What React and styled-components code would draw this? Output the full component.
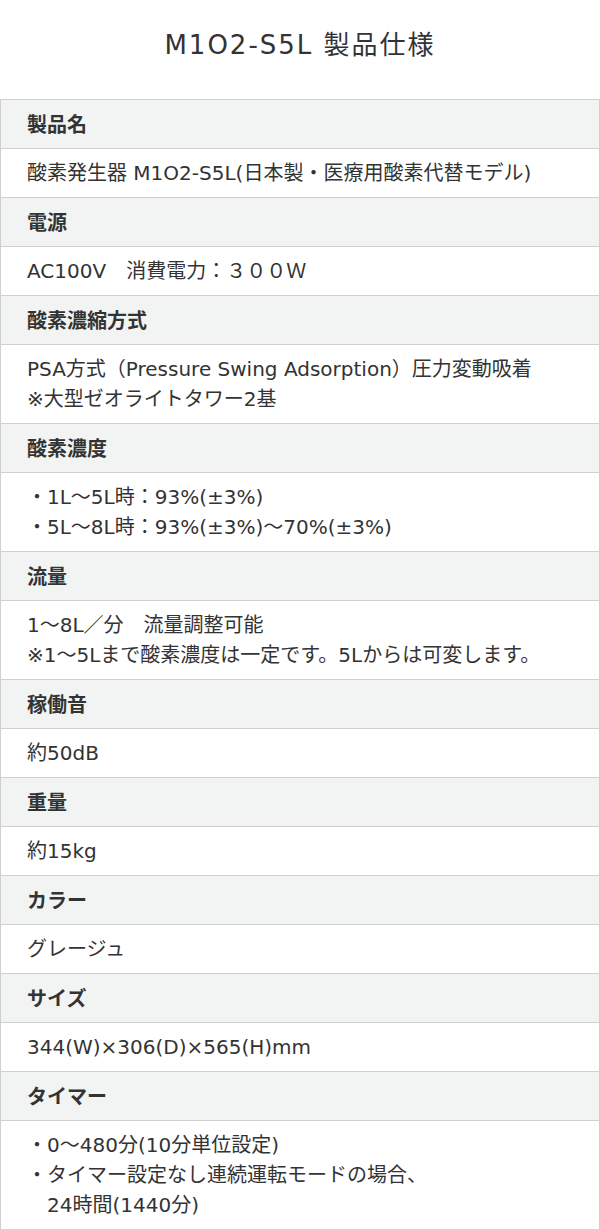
import styled, { createGlobalStyle } from 'styled-components';

const GlobalStyle = createGlobalStyle`
  body {
    margin: 0;
    background: #fff;
    font-family: "DejaVu Sans", "Noto Sans CJK JP", sans-serif;
    color: #333;
  }
`;

// spec rows, each item is one line (or a bullet item)
const specs = [
  { label: '製品名', lines: ['酸素発生器 M1O2-S5L(日本製・医療用酸素代替モデル)'] },
  { label: '電源', lines: ['AC100V　消費電力：３００Ｗ'] },
  {
    label: '酸素濃縮方式',
    lines: ['PSA方式（Pressure Swing Adsorption）圧力変動吸着', '※大型ゼオライトタワー2基'],
  },
  {
    label: '酸素濃度',
    bullets: ['1L～5L時：93%(±3%)', '5L～8L時：93%(±3%)～70%(±3%)'],
  },
  {
    label: '流量',
    lines: ['1～8L／分　流量調整可能', '※1～5Lまで酸素濃度は一定です。5Lからは可変します。'],
  },
  { label: '稼働音', lines: ['約50dB'] },
  { label: '重量', lines: ['約15kg'] },
  { label: 'カラー', lines: ['グレージュ'] },
  { label: 'サイズ', lines: ['344(W)×306(D)×565(H)mm'] },
  {
    label: 'タイマー',
    bullets: ['0～480分(10分単位設定)', ['タイマー設定なし連続運転モードの場合、', '24時間(1440分)']],
  },
];

const App = () => {
  return (
    <>
      <GlobalStyle />
      <Page>
        <Title>M1O2-S5L 製品仕様</Title>
        <SpecTable>
          {specs.map((spec) => (
            <div key={spec.label}>
              <Cell $head>{spec.label}</Cell>
              <Cell>
                {spec.lines &&
                  spec.lines.map((line) => <Line key={line}>{line}</Line>)}
                {spec.bullets &&
                  spec.bullets.map((item, i) => (
                    <Bullet key={i}>
                      {Array.isArray(item) ? (
                        <>
                          {item[0]}
                          <br />
                          {item[1]}
                        </>
                      ) : (
                        item
                      )}
                    </Bullet>
                  ))}
              </Cell>
            </div>
          ))}
        </SpecTable>
      </Page>
    </>
  );
};
export default App;

const Page = styled.main`
  width: 600px;
`;

const Title = styled.h2`
  margin: 0;
  padding: 29px 0 38px;
  text-align: center;
  font-size: 26px;
  line-height: 32px;
  font-weight: 400;
  letter-spacing: 2px;
  color: #333;
`;

const SpecTable = styled.section`
  border-left: 1px solid #cfcfcf;
  border-right: 1px solid #cfcfcf;
  border-top: 1px solid #cfcfcf;
`;

const Cell = styled.div`
  padding: 9px 26px;
  font-size: 20px;
  line-height: 30px;
  border-bottom: 1px solid #cfcfcf;
  background: ${(p) => (p.$head ? '#f2f3f3' : '#fff')};
  font-weight: ${(p) => (p.$head ? 700 : 400)};
  font-family: ${(p) =>
    p.$head ? '"Noto Sans CJK JP", sans-serif' : 'inherit'};
  color: #333;
`;

const Line = styled.div``;

const Bullet = styled.div`
  padding-left: 1em;

  &::before {
    content: '・';
    display: inline-block;
    width: 1em;
    margin-left: -1em;
  }
`;
